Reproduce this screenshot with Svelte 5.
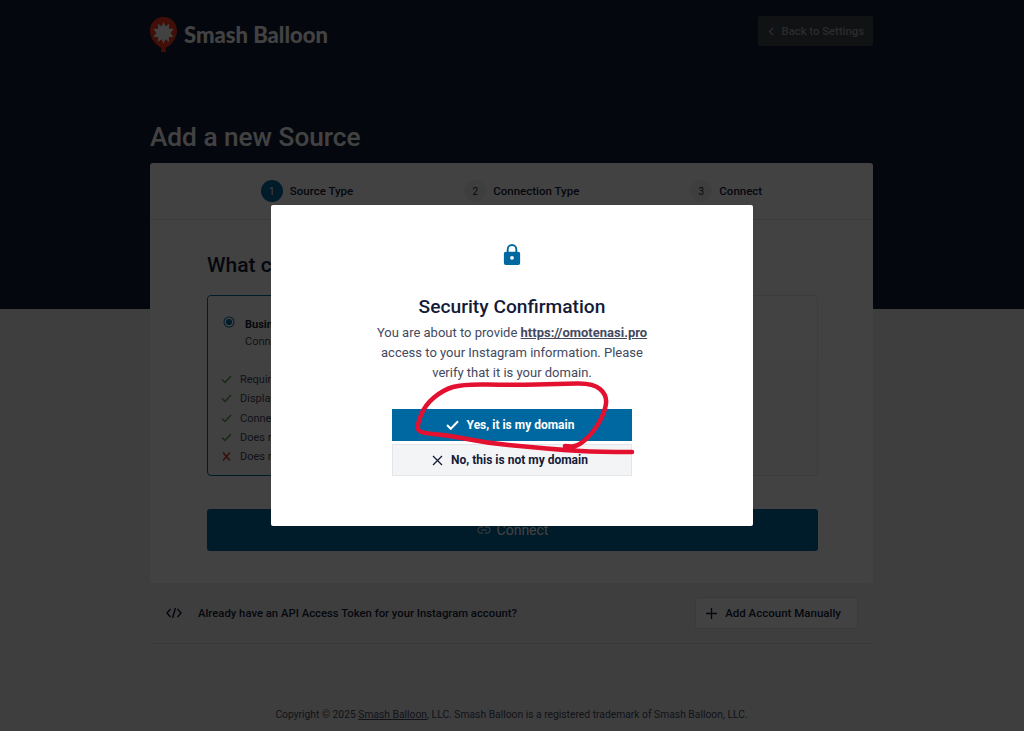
<script>
    const steps = [
        { n: 1, label: 'Source Type', active: true },
        { n: 2, label: 'Connection Type', active: false },
        { n: 3, label: 'Connect', active: false }
    ]
    const features = [
        { ok: true, text: 'Requires a Business account' },
        { ok: true, text: 'Display photos and videos' },
        { ok: true, text: 'Connect hashtag feeds' },
        { ok: true, text: 'Does not expire' },
        { ok: false, text: 'Does not show stories' }
    ]

    // the hand drawn red loop round the "yes" button
    const loop = [
        [632, 452], [598, 452], [563, 450], [530, 447], [487, 443], [447, 435], [419, 433],
        [417, 425], [425, 405], [443, 390], [463, 384], [513, 385], [560, 384], [593, 383],
        [607, 395], [605, 412], [593, 433], [577, 447], [565, 446]
    ]
    const smooth = (pts) => {
        let d = `M${pts[0][0]} ${pts[0][1]}`
        for (let i = 1; i < pts.length - 1; i++) {
            const mx = (pts[i][0] + pts[i + 1][0]) / 2
            const my = (pts[i][1] + pts[i + 1][1]) / 2
            d += `Q${pts[i][0]} ${pts[i][1]} ${mx} ${my}`
        }
        const last = pts[pts.length - 1]
        return d + `L${last[0]} ${last[1]}`
    }
    const loopPath = smooth(loop)
</script>

<div class="page">
    <div class="hero">
        <div class="wrap">
            <div class="top">
                <div class="logo">
                    <svg width="27" height="35" viewBox="0 0 27 35">
                        <path d="M13.500 0C6 0 0 6 0 13.500c0 8 6 15 11.500 17.500L11 35h5l-.5-4C21 28.500 27 21.500 27 13.500 27 6 21 0 13.500 0z" fill="#ff3a20"/>
                        <path d="M13.500 5l1.900 4.500 3.900-2.700-.6 4.700 4.800.6-2.900 3.800 2.900 3.800-4.800.6.6 4.700-3.900-2.700-1.900 4.500-1.900-4.500-3.900 2.700.6-4.700-4.800-.6 2.900-3.800-2.900-3.800 4.800-.6-.6-4.700 3.900 2.700z" fill="#fff"/>
                    </svg>
                    <span>Smash Balloon</span>
                </div>
                <div class="back">
                    <svg width="6" height="9" viewBox="0 0 6 9"><path d="M5 1L1.500 4.500 5 8" fill="none" stroke="#a0a6b0" stroke-width="1.300"/></svg>
                    Back to Settings
                </div>
            </div>
            <h1>Add a new Source</h1>
        </div>
    </div>

    <div class="wrap">
        <div class="card">
            <div class="steps">
                {#each steps as s}
                    <div class="step">
                        <span class="num {s.active ? 'on' : ''}">{s.n}</span>
                        <span>{s.label}</span>
                    </div>
                {/each}
            </div>
            <div class="body">
                <h2>What can your feed display?</h2>
                <div class="options">
                    <div class="option selected">
                        <div class="opt-head">
                            <span class="radio"></span>
                            <div>
                                <b>Business Basic</b>
                                <p>Connect your account</p>
                            </div>
                        </div>
                        <ul>
                            {#each features as f}
                                <li>
                                    {#if f.ok}
                                        <svg width="11" height="9" viewBox="0 0 11 9"><path d="M1 4.500L4 7.500 10 1" fill="none" stroke="#59a14f" stroke-width="1.500"/></svg>
                                    {:else}
                                        <svg width="11" height="9" viewBox="0 0 11 9"><path d="M2 .5l7 8M9 .5l-7 8" fill="none" stroke="#d63638" stroke-width="1.500"/></svg>
                                    {/if}
                                    {f.text}
                                </li>
                            {/each}
                        </ul>
                    </div>
                    <div class="option">
                        <div class="opt-head"></div>
                    </div>
                </div>
                <div class="connect">
                    <svg width="14" height="8" viewBox="0 0 14 8"><path d="M6 1H4a3 3 0 0 0 0 6h2M8 1h2a3 3 0 0 1 0 6H8M4.500 4h5" fill="none" stroke="#fff" stroke-width="1.300"/></svg>
                    Connect
                </div>
            </div>
        </div>
        <div class="manual">
            <svg width="16" height="12" viewBox="0 0 16 12"><path d="M4.500 2L1 6l3.500 4M11.500 2L15 6l-3.500 4M9.500 1L6.500 11" fill="none" stroke="#141b38" stroke-width="1.400"/></svg>
            <span class="manual-text">Already have an API Access Token for your Instagram account?</span>
            <div class="add">
                <svg width="11" height="11" viewBox="0 0 11 11"><path d="M5.500 0v11M0 5.500h11" fill="none" stroke="#141b38" stroke-width="1.300"/></svg>
                Add Account Manually
            </div>
        </div>
        <div class="copy">Copyright © 2025 <u>Smash Balloon</u>, LLC. Smash Balloon is a registered trademark of Smash Balloon, LLC.</div>
    </div>
</div>

<div class="overlay">
    <div class="modal">
        <svg class="lock" width="18" height="21" viewBox="0 0 18 22">
            <path d="M9 0a5.500 5.500 0 0 0-5.500 5.500V8H2.500A2 2 0 0 0 .5 10v10a2 2 0 0 0 2 2h13a2 2 0 0 0 2-2V10a2 2 0 0 0-2-2h-1V5.500A5.500 5.500 0 0 0 9 0zm0 2a3.500 3.500 0 0 1 3.500 3.500V8h-7V5.500A3.500 3.500 0 0 1 9 2zm0 10.500a2 2 0 1 1 0 4 2 2 0 0 1 0-4z" fill="#0068a0"/>
        </svg>
        <h3>Security Confirmation</h3>
        <p>You are about to provide <a href="#top">https://omotenasi.pro</a><br>access to your Instagram information. Please<br>verify that it is your domain.</p>
        <div class="btn yes">
            <svg width="13" height="10" viewBox="0 0 13 10"><path d="M1 5l3.800 3.800L12 1.200" fill="none" stroke="#fff" stroke-width="2"/></svg>
            Yes, it is my domain
        </div>
        <div class="btn no">
            <svg width="11" height="11" viewBox="0 0 11 11"><path d="M1 1l9 9M10 1l-9 9" fill="none" stroke="#141b38" stroke-width="1.300"/></svg>
            No, this is not my domain
        </div>
    </div>
</div>

<svg class="scribble" width="1024" height="731" viewBox="0 0 1024 731">
    <path d={loopPath} fill="none" stroke="#e3112f" stroke-width="4.500" stroke-linecap="round" stroke-linejoin="round"/>
</svg>

<style>
    :global(body){
        margin: 0;
        background: #eff0f1;
        font-family: Roboto, "Noto Sans", sans-serif;
    }
    .page{
        height: 731px;
        overflow: hidden;
    }
    .hero{
        height: 309px;
        margin-bottom: -146px;
        background: #141b38;
    }
    .wrap{
        padding: 0 151px 0 150px;
    }
    .top{
        display: flex;
        justify-content: space-between;
        align-items: flex-start;
        padding-top: 16px;
    }
    .logo{
        display: flex;
        align-items: center;
        gap: 7px;
        margin-top: 1px;
        color: #fff;
        font-family: Lato, sans-serif;
        font-weight: 900;
        font-size: 22px;
    }
    .back{
        display: flex;
        align-items: center;
        gap: 8px;
        height: 30px;
        padding: 0 9px 0 10px;
        border-radius: 2px;
        background: #44464c;
        color: #a0a6b0;
        font-size: 11.300px;
        font-weight: 500;
    }
    h1{
        margin: 69px 0 0;
        color: #fff;
        font-size: 26.200px;
        font-weight: 500;
        line-height: 33px;
    }
    .card{
        height: 420px;
        background: #fff;
        border-radius: 3px;
    }
    .steps{
        display: flex;
        justify-content: center;
        gap: 111px;
        height: 56px;
        align-items: center;
        border-bottom: 1px solid #e8e8eb;
    }
    .step{
        display: flex;
        align-items: center;
        gap: 7px;
        font-size: 11.500px;
        font-weight: 500;
        color: #141b38;
    }
    .num{
        width: 22px;
        height: 22px;
        border-radius: 50%;
        display: flex;
        align-items: center;
        justify-content: center;
        background: #f0f0f0;
        font-size: 10px;
        font-weight: 400;
    }
    .on{
        background: #0068a0;
        color: #fff;
    }
    .body{
        padding: 32px 55px 0 57px;
    }
    h2{
        margin: 0 0 17px;
        font-size: 21px;
        line-height: 26px;
        font-weight: 500;
        color: #141b38;
    }
    .options{
        display: flex;
        gap: 6px;
    }
    .option{
        flex: 1;
        height: 181px;
        border: 1px solid #e6e6eb;
        border-radius: 4px;
        background: #f9f9fa;
        box-sizing: border-box;
    }
    .selected{
        border: 1px solid #0068a0;
    }
    .opt-head{
        display: flex;
        gap: 13px;
        height: 63px;
        padding: 22px 18px 0;
        box-sizing: border-box;
        background: #fff;
        border-radius: 4px 4px 0 0;
        font-size: 11px;
        color: #141b38;
    }
    .opt-head p{
        margin: 4px 0 0;
        color: #434960;
    }
    .radio{
        width: 6px;
        height: 6px;
        margin-top: 1px;
        border-radius: 50%;
        background: #0068a0;
        box-shadow: 0 0 0 1.500px #fff, 0 0 0 2.500px #0068a0;
    }
    ul{
        list-style: none;
        margin: 0;
        padding: 11px 13px;
    }
    li{
        display: flex;
        align-items: center;
        gap: 8px;
        height: 19.300px;
        font-size: 11px;
        color: #434960;
    }
    .connect{
        display: flex;
        align-items: center;
        justify-content: center;
        gap: 6px;
        height: 42px;
        margin-top: 33px;
        border-radius: 3px;
        background: #0068a0;
        color: #fff;
        font-size: 14px;
    }
    .connect svg{
        opacity: .7;
    }
    .manual{
        display: flex;
        align-items: center;
        height: 60px;
        padding: 0 15px 0 16px;
        border-bottom: 1px solid #dcdde1;
        font-size: 11.300px;
        font-weight: 500;
        color: #141b38;
    }
    .manual-text{
        flex: 1;
        margin-left: 16px;
    }
    .add{
        display: flex;
        align-items: center;
        gap: 8px;
        height: 30px;
        padding: 0 16px 0 10px;
        border: 1px solid #e0e0e4;
        border-radius: 3px;
        background: #fff;
        font-size: 11.500px;
    }
    .copy{
        margin-top: 64px;
        text-align: center;
        font-size: 10.300px;
        color: #434960;
    }
    .overlay{
        position: fixed;
        inset: 0;
        display: flex;
        align-items: center;
        justify-content: center;
        background: rgba(0, 0, 0, .74);
    }
    .modal{
        width: 482px;
        height: 321px;
        box-sizing: border-box;
        padding-top: 39px;
        background: #fff;
        border-radius: 2px;
        display: flex;
        flex-direction: column;
        align-items: center;
    }
    .lock{
        display: block;
    }
    h3{
        margin: 29px 0 0;
        font-size: 19.200px;
        line-height: 26px;
        font-weight: 500;
        color: #141b38;
    }
    .modal p{
        margin: 3px 0 26px;
        text-align: center;
        font-size: 13px;
        line-height: 20px;
        color: #434960;
    }
    .modal a{
        font-weight: 700;
        color: #434960;
    }
    .btn{
        width: 240px;
        height: 32px;
        box-sizing: border-box;
        display: flex;
        align-items: center;
        justify-content: center;
        gap: 8px;
        padding-right: 4px;
        font-size: 12px;
        font-weight: 700;
    }
    .yes{
        background: #0068a0;
        color: #fff;
    }
    .no{
        margin-top: 3px;
        background: #f3f4f5;
        border: 1px solid #e4e5e8;
        color: #141b38;
    }
    .scribble{
        position: fixed;
        left: 0;
        top: 0;
        pointer-events: none;
    }
</style>
